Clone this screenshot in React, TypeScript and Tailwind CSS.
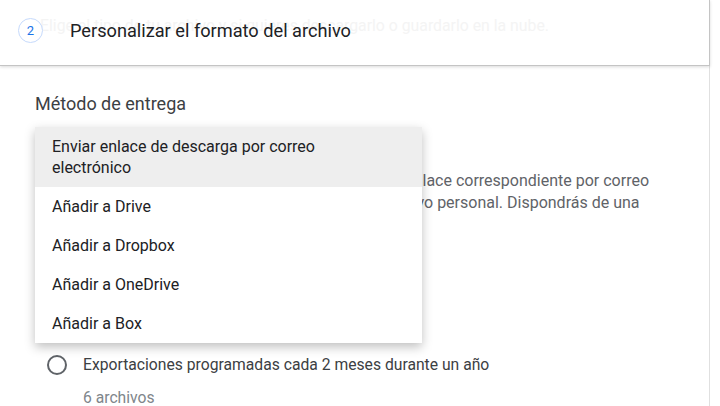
import React from 'react';

const menuItems = ['Añadir a Drive', 'Añadir a Dropbox', 'Añadir a OneDrive', 'Añadir a Box'];

const App = () => {
  return (
    <div className="relative w-[720px] h-[406px] overflow-hidden bg-white font-['Roboto',sans-serif] text-[#202124]">
      {/* Tarjeta del paso 2 */}
      <div className="relative w-[710px] h-[66px] bg-white border-r border-b border-[#c4c4c4] shadow-[0_1px_3px_rgba(0,0,0,0.15)]">
        <div className="absolute left-[40px] top-[14px] text-[15.8px] text-[#f4f4f4] whitespace-nowrap">
          Elige el tipo de tu archivo y si quieres descargarlo o guardarlo en la nube.
        </div>
        <div className="relative flex items-center h-full pl-[18px] pb-[4px]">
          <div className="w-[25px] h-[25px] rounded-full border border-[#c6dafc] bg-white flex items-center justify-center text-[13px] text-[#1a73e8]">
            2
          </div>
          <span className="ml-[27px] text-[18.2px] text-[#202124]">Personalizar el formato del archivo</span>
        </div>
      </div>

      {/* Panel inferior */}
      <div className="w-[710px] h-[340px] border-r border-[#e0e0e0] pl-[35px] pt-[24px]">
        <div className="text-[18px] text-[#3c4043]">Método de entrega</div>

        <div className="mt-[53px] pl-[48px] text-[16px] leading-[22px] text-[#5f6368]">
          <div className="whitespace-nowrap">Cuando tu archivo esté listo te enviaremos el enlace correspondiente por correo</div>
          <div className="whitespace-nowrap">electrónico para que puedas descargar tu archivo personal. Dispondrás de una</div>
          <div className="whitespace-nowrap">semana para descargarlo.</div>
        </div>

        <div className="mt-[117px] flex items-center gap-[16px] pl-[12px]">
          <div className="w-[20px] h-[20px] rounded-full border-2 border-[#5f6368]" />
          <span className="text-[15.7px] text-[#3c4043]">Exportaciones programadas cada 2 meses durante un año</span>
        </div>
        <div className="mt-[9px] pl-[48px] text-[15.7px] text-[#80868b]">6 archivos</div>
      </div>

      {/* Menú desplegable */}
      <div className="absolute left-[35px] top-[127px] w-[387px] bg-white shadow-[0_4px_10px_rgba(0,0,0,0.25)]">
        <div className="bg-[#eeeeee] px-[17px] pt-[9px] pb-[9px] text-[16px] leading-[21px]">
          Enviar enlace de descarga por correo
          <br />
          electrónico
        </div>
        {menuItems.map((item) => (
          <div key={item} className="h-[39px] flex items-center px-[17px] text-[16px]">
            {item}
          </div>
        ))}
      </div>
    </div>
  );
};

export default App;
